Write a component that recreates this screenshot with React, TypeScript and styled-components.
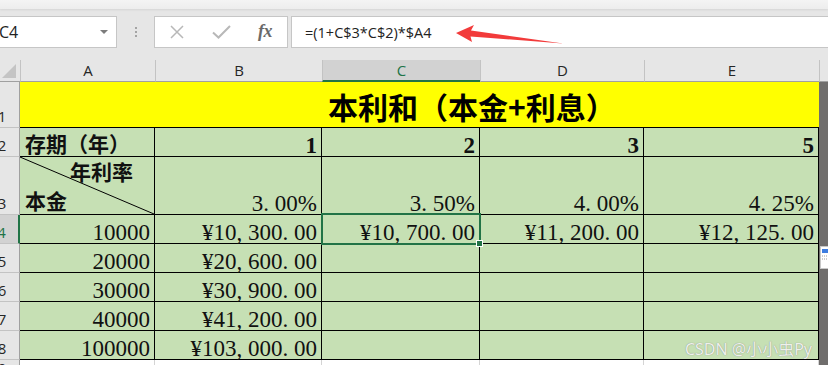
import React, { FC } from 'react';
import styled, { createGlobalStyle, css } from 'styled-components';

const GREEN = '#c6e0b4';
const ACCENT = '#217346';

const GlobalStyle = createGlobalStyle`
  html, body {
    margin: 0;
    padding: 0;
    background: #e6e6e6;
  }
  body {
    font-family: "Open Sans", "Noto Sans", sans-serif;
    overflow: hidden;
  }
`;

const columns = ['A', 'B', 'C', 'D', 'E'];
const years = ['1', '2', '3', '5'];
const rates = ['3.00%', '3.50%', '4.00%', '4.25%'];
const rows = [
    { n: 4, principal: '10000', values: ['¥10,300.00', '¥10,700.00', '¥11,200.00', '¥12,125.00'] },
    { n: 5, principal: '20000', values: ['¥20,600.00', '', '', ''] },
    { n: 6, principal: '30000', values: ['¥30,900.00', '', '', ''] },
    { n: 7, principal: '40000', values: ['¥41,200.00', '', '', ''] },
    { n: 8, principal: '100000', values: ['¥103,000.00', '', '', ''] },
];

// SimSun-style spacing: comma and period take half an em
const Num: FC<{ text: string }> = ({ text }) => (
    <NumText>
        {text.split('').map((ch, i) =>
            ch === ',' || ch === '.' ? (
                <Punct key={i}>{ch}</Punct>
            ) : (
                <React.Fragment key={i}>{ch}</React.Fragment>
            ),
        )}
    </NumText>
);

const App: FC = () => {
    return (
        <Frame>
            <GlobalStyle />
            <Toolbar>
                <TopBand />
                <BarRow>
                    <NameBox>
                        <NameText>C4</NameText>
                        <Caret />
                    </NameBox>
                    <Grip>
                        <Dot />
                        <Dot />
                        <Dot />
                    </Grip>
                    <FxBox>
                        <FxSlot>
                            <svg width="16" height="14" viewBox="0 0 16 14">
                                <path d="M2 1 L14 13 M14 1 L2 13" stroke="#b8b8b8" strokeWidth="1.5" fill="none" />
                            </svg>
                        </FxSlot>
                        <FxSlot>
                            <svg width="19" height="14" viewBox="0 0 19 14">
                                <path d="M1 7.5 L6.5 12.5 L18 1" stroke="#b8b8b8" strokeWidth="2" fill="none" />
                            </svg>
                        </FxSlot>
                        <FxSlot>
                            <FxLabel>fx</FxLabel>
                        </FxSlot>
                    </FxBox>
                    <FormulaBox>=(1+C$3*C$2)*$A4</FormulaBox>
                </BarRow>
                <Arrow width="120" height="30" viewBox="0 0 120 30">
                    <path d="M6 13 L24 5 L21 10.5 L113 23.5 L20.5 16.5 L22 22 Z" fill="#f23b3b" />
                </Arrow>
            </Toolbar>

            <Sheet>
                <Corner>
                    <svg width="14" height="14" viewBox="0 0 14 14">
                        <polygon points="14,0 14,14 0,14" fill="#c4c4c4" />
                    </svg>
                </Corner>
                {columns.map(c => (
                    <ColHead key={c} $active={c === 'C'}>
                        {c}
                    </ColHead>
                ))}
                <ColHeadFiller />

                <DarkStrip />

                <RowHead>1</RowHead>
                <TitleCell>本利和（本金+利息）</TitleCell>

                <RowHead>2</RowHead>
                <Cell $align="left">
                    <CjkText>存期（年）</CjkText>
                </Cell>
                {years.map(y => (
                    <Cell key={y} $align="right">
                        <NumText $bold>{y}</NumText>
                    </Cell>
                ))}

                <RowHead>3</RowHead>
                <DiagCell>
                    <DiagLine preserveAspectRatio="none" viewBox="0 0 100 100">
                        <line
                            x1="0"
                            y1="0"
                            x2="100"
                            y2="100"
                            stroke="#000"
                            strokeWidth="1"
                            vectorEffect="non-scaling-stroke"
                        />
                    </DiagLine>
                    <DiagTop>年利率</DiagTop>
                    <DiagBottom>本金</DiagBottom>
                </DiagCell>
                {rates.map(r => (
                    <Cell key={r} $align="right">
                        <Num text={r} />
                    </Cell>
                ))}

                {rows.map(row => (
                    <React.Fragment key={row.n}>
                        <RowHead $active={row.n === 4}>{row.n}</RowHead>
                        <Cell $align="right">
                            <NumText>{row.principal}</NumText>
                        </Cell>
                        {row.values.map((v, i) => (
                            <Cell key={i} $align="right" $selected={row.n === 4 && i === 1}>
                                {v && <Num text={v} />}
                            </Cell>
                        ))}
                    </React.Fragment>
                ))}

                <RowHead>9</RowHead>
                {columns.map(c => (
                    <BlankCell key={c} />
                ))}

                <Watermark>CSDN @小小虫Py</Watermark>
                <PasteIcon width="8" height="23" viewBox="0 0 8 23">
                    <rect x="0.5" y="0.5" width="12" height="22" fill="#fff" stroke="#c8c8c8" />
                    <rect x="2" y="3" width="7" height="4" fill="#3d7de0" />
                    <path d="M2 10 H8 M2 13 H8" stroke="#9a9a9a" strokeDasharray="1 1" />
                </PasteIcon>
            </Sheet>
        </Frame>
    );
};

export default App;

const Frame = styled.div`
    position: relative;
    width: 828px;
    height: 365px;
    overflow: hidden;
    background: #e6e6e6;
`;

const Toolbar = styled.div`
    position: relative;
    height: 60px;
    display: flex;
    flex-direction: column;
`;

const TopBand = styled.div`
    height: 9px;
    background: linear-gradient(#f4f4f4, #ededed);
    box-shadow: 0 1px 2px rgba(0, 0, 0, 0.08);
`;

const BarRow = styled.div`
    display: flex;
    margin-top: 7px;
    height: 32px;
`;

const boxBorder = css`
    box-sizing: border-box;
    background: #fff;
    border: 1px solid #c6c6c6;
`;

const NameBox = styled.div`
    ${boxBorder};
    border-left: none;
    width: 117px;
    display: flex;
    align-items: center;
    justify-content: space-between;
    padding-right: 8px;
`;

const NameText = styled.span`
    font-size: 16px;
    color: #222;
    margin-left: -1px;
`;

const Caret = styled.span`
    width: 0;
    height: 0;
    border-left: 4px solid transparent;
    border-right: 4px solid transparent;
    border-top: 4px solid #7c7c7c;
`;

const Grip = styled.div`
    width: 37px;
    display: flex;
    flex-direction: column;
    align-items: center;
    justify-content: center;
    gap: 2px;
`;

const Dot = styled.span`
    width: 2px;
    height: 2px;
    background: #a4a4a4;
`;

const FxBox = styled.div`
    ${boxBorder};
    width: 134px;
    display: grid;
    grid-template-columns: repeat(3, 44px);
    align-items: center;
`;

const FxSlot = styled.div`
    display: flex;
    justify-content: center;
    align-items: center;
`;

const FxLabel = styled.span`
    font-family: "Liberation Serif", serif;
    font-style: italic;
    font-weight: bold;
    font-size: 18px;
    color: #6a6a6a;
    letter-spacing: -0.5px;
    margin-top: -2px;
`;

const FormulaBox = styled.div`
    ${boxBorder};
    border-right: none;
    flex: 1;
    margin-left: 3px;
    padding-left: 13px;
    display: flex;
    align-items: center;
    font-size: 14.5px;
    color: #222;
`;

const Arrow = styled.svg`
    position: absolute;
    left: 450px;
    top: 20px;
`;

const Sheet = styled.div`
    position: relative;
    display: grid;
    grid-template-columns: 20px 135px 167px 158px 164px 175px 9px;
    grid-template-rows: 22px 46px 29px 58px repeat(5, 29px) 20px;
`;

const Corner = styled.div`
    display: flex;
    justify-content: flex-end;
    align-items: flex-end;
    padding: 0 4px 3px 0;
    border-bottom: 1px solid #a0a0a0;
`;

const ColHead = styled.div<{ $active?: boolean }>`
    box-sizing: border-box;
    display: flex;
    justify-content: center;
    align-items: flex-end;
    padding-bottom: 1px;
    font-size: 15px;
    line-height: 20px;
    color: #262626;
    border-left: 1px solid #c3c3c3;
    border-bottom: 1px solid #a0a0a0;

    ${p =>
        p.$active &&
        css`
            background: #d2d2d2;
            color: ${ACCENT};
            border-bottom: 2px solid ${ACCENT};
            padding-bottom: 0;
        `}
`;

const ColHeadFiller = styled.div`
    border-left: 1px solid #c3c3c3;
    border-bottom: 1px solid #a0a0a0;
`;

const DarkStrip = styled.div`
    grid-column: 7;
    grid-row: 2 / -1;
    background: #6f6d6c;
`;

const RowHead = styled.div<{ $active?: boolean }>`
    box-sizing: border-box;
    display: flex;
    justify-content: center;
    align-items: flex-end;
    padding-right: 15px;
    padding-bottom: 1px;
    font-size: 15px;
    line-height: 20px;
    color: #262626;
    border-bottom: 1px solid #c3c3c3;
    border-right: 1px solid #a0a0a0;

    ${p =>
        p.$active &&
        css`
            background: #d2d2d2;
            color: ${ACCENT};
            border-right: 2px solid ${ACCENT};
        `}
`;

const TitleCell = styled.div`
    grid-column: span 5;
    box-sizing: border-box;
    background: #ffff00;
    border-bottom: 1px solid #000;
    display: flex;
    align-items: flex-end;
    padding: 0 0 3px 308px;
    font-family: "Noto Sans CJK SC", sans-serif;
    font-weight: bold;
    font-size: 30px;
    line-height: 36px;
    color: #000;
    white-space: nowrap;
`;

const Cell = styled.div<{ $align: 'left' | 'right'; $selected?: boolean }>`
    position: relative;
    box-sizing: border-box;
    background: ${GREEN};
    border-right: 1px solid #000;
    border-bottom: 1px solid #000;
    display: flex;
    align-items: flex-end;
    justify-content: ${p => (p.$align === 'left' ? 'flex-start' : 'flex-end')};
    padding: 0 4px 0 5px;
    white-space: nowrap;

    ${p =>
        p.$selected &&
        css`
            z-index: 1;
            &::before {
                content: '';
                position: absolute;
                top: -2px;
                left: -1px;
                right: -2px;
                bottom: -2px;
                border: 2px solid ${ACCENT};
            }
            &::after {
                content: '';
                position: absolute;
                right: -4px;
                bottom: -4px;
                width: 5px;
                height: 5px;
                background: ${ACCENT};
                border: 1px solid #fff;
            }
        `}
`;

const BlankCell = styled.div`
    background: #fff;
    border-right: 1px solid #d4d4d4;
`;

const NumText = styled.span<{ $bold?: boolean }>`
    font-family: "Liberation Serif", serif;
    font-size: 23px;
    line-height: 20px;
    font-weight: ${p => (p.$bold ? 'bold' : 'normal')};
    color: #111;
`;

const Punct = styled.span`
    display: inline-block;
    width: 0.5em;
    text-align: left;
`;

const CjkText = styled.span`
    font-family: "Noto Sans CJK SC", sans-serif;
    font-weight: bold;
    font-size: 21px;
    line-height: 26px;
    color: #111;
`;

const DiagCell = styled.div`
    position: relative;
    box-sizing: border-box;
    background: ${GREEN};
    border-right: 1px solid #000;
    border-bottom: 1px solid #000;
    display: flex;
    flex-direction: column;
    justify-content: space-between;
    padding: 2px 0 2px 5px;
    font-family: "Noto Sans CJK SC", sans-serif;
    font-weight: bold;
    font-size: 21px;
    line-height: 24px;
    color: #111;
`;

const DiagLine = styled.svg`
    position: absolute;
    left: 0;
    top: 0;
    width: 100%;
    height: 100%;
`;

const DiagTop = styled.span`
    position: relative;
    align-self: flex-end;
    margin-right: 21px;
`;

const DiagBottom = styled.span`
    position: relative;
`;

const Watermark = styled.div`
    position: absolute;
    right: 16px;
    top: 276px;
    font-family: "Noto Sans", "Noto Sans CJK SC", sans-serif;
    font-size: 16px;
    color: #eef0ec;
    text-shadow: 0 0 1px rgba(90, 90, 90, 0.7);
    white-space: nowrap;
`;

const PasteIcon = styled.svg`
    position: absolute;
    left: 820px;
    top: 186px;
`;
